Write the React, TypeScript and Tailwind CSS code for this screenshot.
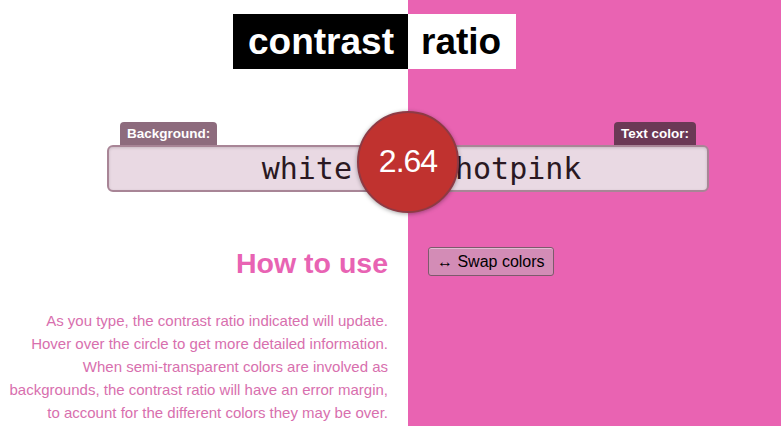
import React from "react";

export default function App() {
  const sans = { fontFamily: '"Liberation Sans", Arial, Helvetica, sans-serif' };
  return (
    <div
      className="w-[781px] h-[426px] overflow-hidden bg-[linear-gradient(to_right,#ffffff_408px,#e963b2_408px)]"
      style={sans}
    >
      {/* Title */}
      <div className="grid grid-cols-[408px_1fr] pt-[14px]">
        <div className="flex justify-end">
          <div className="h-[55px] bg-black text-white font-bold text-[37px] leading-[55px] pl-[15px] pr-[14px]">
            contrast
          </div>
        </div>
        <div className="flex justify-start">
          <div className="h-[55px] bg-white text-black font-bold text-[37px] leading-[55px] pl-[13px] pr-[15px]">
            ratio
          </div>
        </div>
      </div>

      {/* Inputs */}
      <div className="relative grid grid-cols-[408px_1fr] mt-[53px]">
        <div className="flex justify-end">
          <div className="w-[301px] flex flex-col items-start">
            <div className="ml-[13px] h-[23px] px-[7px] rounded-t-[4px] bg-[#8d6b7d] text-white font-bold text-[13.5px] leading-[24px]">
              Background:
            </div>
            <div className="w-full h-[47px] rounded-[6px] border-2 border-[#a88596] bg-[#e9d9e3] shadow-[inset_0_1px_3px_rgba(0,0,0,0.15)] flex items-center justify-end pr-[54px]">
              <span className="text-[30px] text-[#2a1822]" style={{ fontFamily: '"DejaVu Sans Mono", monospace' }}>
                white
              </span>
            </div>
          </div>
        </div>
        <div className="flex justify-start">
          <div className="w-[301px] flex flex-col items-end">
            <div className="mr-[13px] h-[23px] px-[7px] rounded-t-[4px] bg-[#6b3955] text-white font-bold text-[13.5px] leading-[24px]">
              Text color:
            </div>
            <div className="w-full h-[47px] rounded-[6px] border-2 border-[#a88596] bg-[#e9d9e3] shadow-[inset_0_1px_3px_rgba(0,0,0,0.15)] flex items-center justify-start pl-[45px]">
              <span className="text-[30px] text-[#2a1822]" style={{ fontFamily: '"DejaVu Sans Mono", monospace' }}>
                hotpink
              </span>
            </div>
          </div>
        </div>
        <div className="absolute left-[357px] top-[-11px] w-[102px] h-[102px] rounded-full bg-[#c0322f] border-2 border-[#8e3a44] shadow-[0_1px_4px_rgba(0,0,0,0.35)] flex items-center justify-center">
          <span className="text-white text-[32px] tracking-[-1px] pb-[2px]">2.64</span>
        </div>
      </div>

      {/* How to use + swap */}
      <div className="grid grid-cols-[408px_1fr] mt-[55px]">
        <div className="flex justify-end pr-[20px]">
          <h2 className="text-[28.5px] font-bold text-[#e863b3] leading-[30px] mt-[1px]">How to use</h2>
        </div>
        <div className="flex justify-start pl-[20px]">
          <button className="h-[29px] px-[8px] rounded-[3px] border border-[#7d5a6c] bg-[#d38cb6] text-black text-[16px] leading-[27px] shadow-[inset_0_1px_0_rgba(255,255,255,0.4)]">
            ↔ Swap colors
          </button>
        </div>
      </div>

      {/* Paragraph */}
      <div className="grid grid-cols-[408px_1fr] mt-[31px]">
        <p className="pr-[20px] text-right text-[15px] leading-[23px] text-[#d86fae]">
          As you type, the contrast ratio indicated will update.
          <br />
          Hover over the circle to get more detailed information.
          <br />
          When semi-transparent colors are involved as
          <br />
          backgrounds, the contrast ratio will have an error margin,
          <br />
          to account for the different colors they may be over.
        </p>
        <div />
      </div>
    </div>
  );
}
